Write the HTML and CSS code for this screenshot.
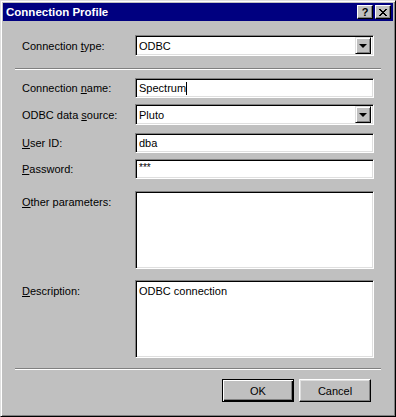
FILE: index.html
```html
<!DOCTYPE html>
<html lang="en">

<head>
    <meta charset="UTF-8">
    <title>Connection Profile</title>
    <link rel="stylesheet" href="styles.css">
</head>

<body>
    <div class="window">
        <div class="titlebar">
            <span class="title">Connection Profile</span>
            <div class="title-btns">
                <span class="tbtn help">?</span>
                <span class="tbtn close">
                    <svg width="8" height="7" viewBox="0 0 8 7">
                        <path d="M0 0h2v1h1v1h2v-1h1v-1h2v1h-1v1h-1v1h-1v1h1v1h1v1h1v1h-2v-1h-1v-1h-2v1h-1v1h-2v-1h1v-1h1v-1h1v-1h-1v-1h-1v-1h-1z" fill="#000"/>
                    </svg>
                </span>
            </div>
        </div>

        <div class="dlg-body">
            <div class="row h21">
                <label>Connection <u>t</u>ype:</label>
                <div class="field combo">
                    <span class="value">ODBC</span>
                    <span class="drop"><span class="arrow"></span></span>
                </div>
            </div>

            <div class="sep sep-top"></div>

            <div class="row h20 r-name">
                <label>Connection <u>n</u>ame:</label>
                <div class="field"><span class="value">Spectrum</span><span class="caret"></span></div>
            </div>
            <div class="row h21 r-source">
                <label>ODBC data <u>s</u>ource:</label>
                <div class="field combo">
                    <span class="value">Pluto</span>
                    <span class="drop"><span class="arrow"></span></span>
                </div>
            </div>
            <div class="row h20 r-user">
                <label><u>U</u>ser ID:</label>
                <div class="field"><span class="value">dba</span></div>
            </div>
            <div class="row h20 r-pass">
                <label><u>P</u>assword:</label>
                <div class="field"><span class="value stars">***</span></div>
            </div>

            <div class="row tall r-other">
                <label><u>O</u>ther parameters:</label>
                <div class="field area"></div>
            </div>
            <div class="row tall r-desc">
                <label><u>D</u>escription:</label>
                <div class="field area"><span class="value">ODBC connection</span></div>
            </div>

            <div class="sep sep-bottom"></div>

            <div class="buttons">
                <button class="btn default">OK</button>
                <button class="btn">Cancel</button>
            </div>
        </div>
    </div>
</body>

</html>
```

FILE: styles.css
```css
body {
    margin: 0;
    font-family: "Liberation Sans", Arial, sans-serif;
    font-size: 11px;
    color: #000;
}

.window {
    width: 396px;
    height: 417px;
    box-sizing: border-box;
    background-color: #c0c0c0;
    border: 1px solid;
    border-color: #dfdfdf #000 #000 #dfdfdf;
    box-shadow: inset 1px 1px #fff, inset -1px -1px #808080;
    padding: 2px;
}

/* title bar */
.titlebar {
    height: 18px;
    background-color: #000080;
    color: #fff;
    display: flex;
    align-items: center;
    padding: 0 2px 0 3px;
}

.title {
    font-weight: bold;
    font-size: 11.5px;
    flex: 1;
}

.title-btns {
    display: flex;
    gap: 2px;
}

.tbtn {
    width: 16px;
    height: 14px;
    box-sizing: border-box;
    background-color: #c0c0c0;
    border: 1px solid;
    border-color: #fff #000 #000 #fff;
    box-shadow: inset -1px -1px #808080;
    color: #000;
    font-weight: bold;
    font-size: 11px;
    line-height: 12px;
    display: flex;
    justify-content: center;
    align-items: center;
}

/* dialog body */
.dlg-body {
    padding: 14px 19px 0 19px;
}

.row {
    display: flex;
    align-items: center;
}

.row label {
    width: 113px;
    flex-shrink: 0;
}

.h20 { height: 20px; }
.h21 { height: 21px; }

.tall {
    height: 78px;
    align-items: flex-start;
}

.tall label {
    padding-top: 5px;
}

.r-name { margin-top: 8px; }
.r-source { margin-top: 6px; }
.r-user { margin-top: 8px; }
.r-pass { margin-top: 6px; }
.r-other { margin-top: 12px; }
.r-desc { margin-top: 11px; }

.field {
    width: 239px;
    height: 100%;
    box-sizing: border-box;
    background-color: #fff;
    border: 1px solid;
    border-color: #808080 #fff #fff #808080;
    box-shadow: inset 1px 1px #000, inset -1px -1px #dfdfdf;
    padding: 0 3px;
    display: flex;
    align-items: center;
}

.area {
    align-items: flex-start;
    padding-top: 4px;
}

.caret {
    width: 1px;
    height: 13px;
    background-color: #000;
}

.stars {
    align-self: flex-start;
    padding-top: 2px;
    font-size: 10px;
    letter-spacing: 0;
}

.combo {
    padding-right: 2px;
}

.combo .value {
    flex: 1;
}

.drop {
    width: 16px;
    height: 17px;
    box-sizing: border-box;
    background-color: #c0c0c0;
    border: 1px solid;
    border-color: #dfdfdf #000 #000 #dfdfdf;
    box-shadow: inset 1px 1px #fff, inset -1px -1px #808080;
    display: flex;
    justify-content: center;
    align-items: center;
}

.arrow {
    width: 0;
    height: 0;
    border-left: 4px solid transparent;
    border-right: 4px solid transparent;
    border-top: 4px solid #000;
    margin-top: 1px;
}

/* etched separators */
.sep {
    height: 0;
    border-top: 1px solid #808080;
    border-bottom: 1px solid #fff;
    margin-left: -7px;
    margin-right: -7px;
}

.sep-top { margin-top: 12px; }
.sep-bottom { margin-top: 10px; }

/* push buttons */
.buttons {
    display: flex;
    justify-content: flex-end;
    gap: 5px;
    margin-top: 9px;
    padding-right: 3px;
}

.btn {
    width: 72px;
    height: 23px;
    box-sizing: border-box;
    background-color: #c0c0c0;
    font-family: "Liberation Sans", Arial, sans-serif;
    font-size: 11px;
    color: #000;
    border: 1px solid;
    border-color: #fff #000 #000 #fff;
    box-shadow: inset -1px -1px #808080, inset 1px 1px #dfdfdf;
    padding: 0;
}

.btn.default {
    border: 1px solid #000;
    box-shadow: inset 1px 1px #fff, inset -1px -1px #000, inset -2px -2px #808080;
}
```
